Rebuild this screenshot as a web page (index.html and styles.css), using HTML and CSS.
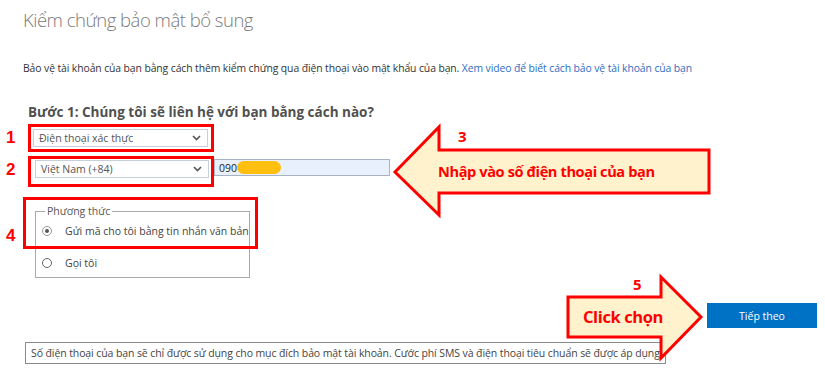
FILE: index.html
```html
<!DOCTYPE html>
<html lang="vi">
<head>
    <meta charset="UTF-8">
    <title>Kiểm chứng bảo mật bổ sung</title>
    <link rel="stylesheet" href="styles.css">
</head>
<body>
    <div class="page">
        <h1 class="title">Kiểm chứng bảo mật bổ sung</h1>
        <p class="intro">Bảo vệ tài khoản của bạn bằng cách thêm kiểm chứng qua điện thoại vào mật khẩu của bạn. <a href="#">Xem video để biết cách bảo vệ tài khoản của bạn</a></p>

        <h2 class="step">Bước 1: Chúng tôi sẽ liên hệ với bạn bằng cách nào?</h2>

        <div class="row">
            <span class="num">1</span>
            <div class="mark">
                <div class="select select-wide">
                    <span>Điện thoại xác thực</span>
                    <svg class="chev" width="9" height="6" viewBox="0 0 9 6"><path d="M1 1l3.5 3.5L8 1" fill="none" stroke="#555" stroke-width="1.6"/></svg>
                </div>
            </div>
        </div>

        <div class="row row-2">
            <span class="num">2</span>
            <div class="mark mark-2">
                <div class="select select-country">
                    <span>Việt Nam (+84)</span>
                    <svg class="chev" width="9" height="6" viewBox="0 0 9 6"><path d="M1 1l3.5 3.5L8 1" fill="none" stroke="#555" stroke-width="1.6"/></svg>
                </div>
            </div>
            <div class="phone">
                <span>090</span>
                <span class="blur"></span>
            </div>
        </div>

        <div class="method-wrap">
            <span class="num num-4">4</span>
            <fieldset class="method">
                <legend>Phương thức</legend>
                <label class="radio"><span class="dot checked"></span>Gửi mã cho tôi bằng tin nhắn văn bản</label>
                <label class="radio"><span class="dot"></span>Gọi tôi</label>
            </fieldset>
            <div class="mark-4"></div>
        </div>

        <div class="actions">
            <button class="next">Tiếp theo</button>
        </div>

        <div class="note">Số điện thoại của bạn sẽ chỉ được sử dụng cho mục đích bảo mật tài khoản. Cước phí SMS và điện thoại tiêu chuẩn sẽ được áp dụng.</div>
    </div>

    <!-- callouts drawn on top of the form -->
    <div class="callout callout-left">
        <svg width="325" height="98" viewBox="0 0 325 98">
            <polygon points="5,50 49,5 49,28 319,28 319,71 49,71 49,93" fill="#fff2cc" stroke="#ff0000" stroke-width="3"/>
        </svg>
        <span class="callout-num num-3">3</span>
        <span class="callout-text text-3">Nhập vào số điện thoại của bạn</span>
    </div>

    <div class="callout callout-right">
        <svg width="145" height="92" viewBox="0 0 145 92">
            <polygon points="5,25 98,25 98,5 138,45 98,86 98,65 5,65" fill="#fff2cc" stroke="#ff0000" stroke-width="3"/>
        </svg>
        <span class="callout-num num-5">5</span>
        <span class="callout-text text-5">Click chọn</span>
    </div>
</body>
</html>
```

FILE: styles.css
```css
body {
    margin: 0;
    background-color: #ffffff;
    font-family: "Open Sans", "Noto Sans", sans-serif;
    color: #333;
    width: 825px;
    height: 372px;
    overflow: hidden;
    position: relative;
}
.page {
    padding: 0 0 0 23px;
}
.title {
    font-size: 18.5px;
    font-weight: 300;
    color: #7b7b7b;
    margin: 0;
    padding-top: 5px;
    line-height: 30px;
    letter-spacing: -0.5px;
}
.intro {
    font-size: 10.4px;
    margin: 26px 0 0;
    line-height: 14px;
    color: #333;
    letter-spacing: -0.1px;
}
.intro a {
    color: #2f6ec2;
    text-decoration: none;
}
.step {
    font-size: 13.5px;
    font-weight: 700;
    color: #505050;
    margin: 28px 0 0 5px;
    line-height: 18px;
}
.row {
    display: flex;
    align-items: flex-start;
    position: relative;
    margin-top: 3px;
}
.row-2 {
    margin-top: 4px;
}
.num {
    position: absolute;
    top: 4px;
    left: -17px;
    color: #ff0000;
    font-weight: 700;
    font-size: 17px;
    font-family: "Liberation Sans", sans-serif;
}
.mark {
    border: 3px solid #ff0000;
    margin-left: 5px;
    padding: 2px 1px 2px 2px;
    width: 177px;
}
.mark-2 {
    padding: 1px 0 6px 4px;
    width: 176px;
}
.select {
    border: 1px solid #c5d0dc;
    height: 16px;
    display: flex;
    align-items: center;
    justify-content: space-between;
    padding: 0 6px 0 5px;
    font-size: 10.5px;
    color: #555;
}
.select-wide {
    width: 162px;
}
.select-country {
    width: 161px;
}
.phone {
    margin-top: 3px;
    width: 170px;
    height: 15px;
    background-color: #e8f0fe;
    border: 1px solid #a7b3c0;
    display: flex;
    align-items: center;
    padding-left: 4px;
    font-size: 10.5px;
    color: #222;
}
.blur {
    display: inline-block;
    width: 44px;
    height: 13px;
    border-radius: 7px;
    background-color: #ffbf0f;
    margin-left: 0;
}
.method-wrap {
    position: relative;
    margin-top: 19px;
    margin-left: 12px;
    width: 215px;
}
.num-4 {
    left: -29px;
    top: 20px;
}
.method {
    border: 1px solid #a9a9a9;
    margin: 0;
    padding: 4px 0 2px 6px;
    height: 72px;
    box-sizing: border-box;
    width: 215px;
}
.method legend {
    font-size: 10.5px;
    color: #555;
    padding: 0 2px;
    margin-left: 3px;
    line-height: 10px;
}
.radio {
    display: flex;
    align-items: center;
    font-size: 10.5px;
    color: #444;
    height: 16px;
    margin-top: 3px;
}
.radio + .radio {
    margin-top: 16px;
}
.dot {
    width: 10px;
    height: 10px;
    border: 1px solid #666;
    border-radius: 50%;
    margin-right: 13px;
    box-sizing: border-box;
    position: relative;
}
.dot.checked {
    border-color: #999;
}
.dot.checked::after {
    content: "";
    position: absolute;
    left: 2px;
    top: 2px;
    width: 4px;
    height: 4px;
    border-radius: 50%;
    background-color: #555;
}
.mark-4 {
    position: absolute;
    left: -12px;
    top: -9px;
    width: 229px;
    height: 46px;
    border: 3px solid #ff0000;
}
.actions {
    display: flex;
    justify-content: flex-end;
    margin-top: 25px;
    padding-right: 8px;
}
.next {
    width: 110px;
    height: 25px;
    border: none;
    background-color: #0072c6;
    color: #fff;
    font-family: "Open Sans", sans-serif;
    font-size: 10.5px;
}
.note {
    margin: 14px 0 0 2px;
    width: 629px;
    border: 1px solid #8a8a8a;
    font-size: 10.5px;
    color: #444;
    padding: 2px 5px;
    line-height: 16px;
    letter-spacing: -0.1px;
    white-space: nowrap;
    overflow: hidden;
}
.callout {
    position: absolute;
}
.callout svg {
    display: block;
}
.callout-left {
    left: 390px;
    top: 122px;
}
.callout-right {
    left: 563px;
    top: 272px;
}
.callout-num,
.callout-text {
    position: absolute;
    color: #ff0000;
    font-weight: 700;
    font-family: "Open Sans", "Liberation Sans", sans-serif;
    white-space: nowrap;
}
.callout-num {
    font-size: 15px;
    line-height: 16px;
}
.num-3 {
    left: 68px;
    top: 6px;
}
.num-5 {
    left: 70px;
    top: 4px;
}
.text-3 {
    left: 48px;
    top: 37px;
    font-size: 14.6px;
    line-height: 24px;
    letter-spacing: -0.4px;
}
.text-5 {
    left: 20px;
    top: 33px;
    font-size: 16.5px;
    line-height: 24px;
    letter-spacing: -0.4px;
}
```
